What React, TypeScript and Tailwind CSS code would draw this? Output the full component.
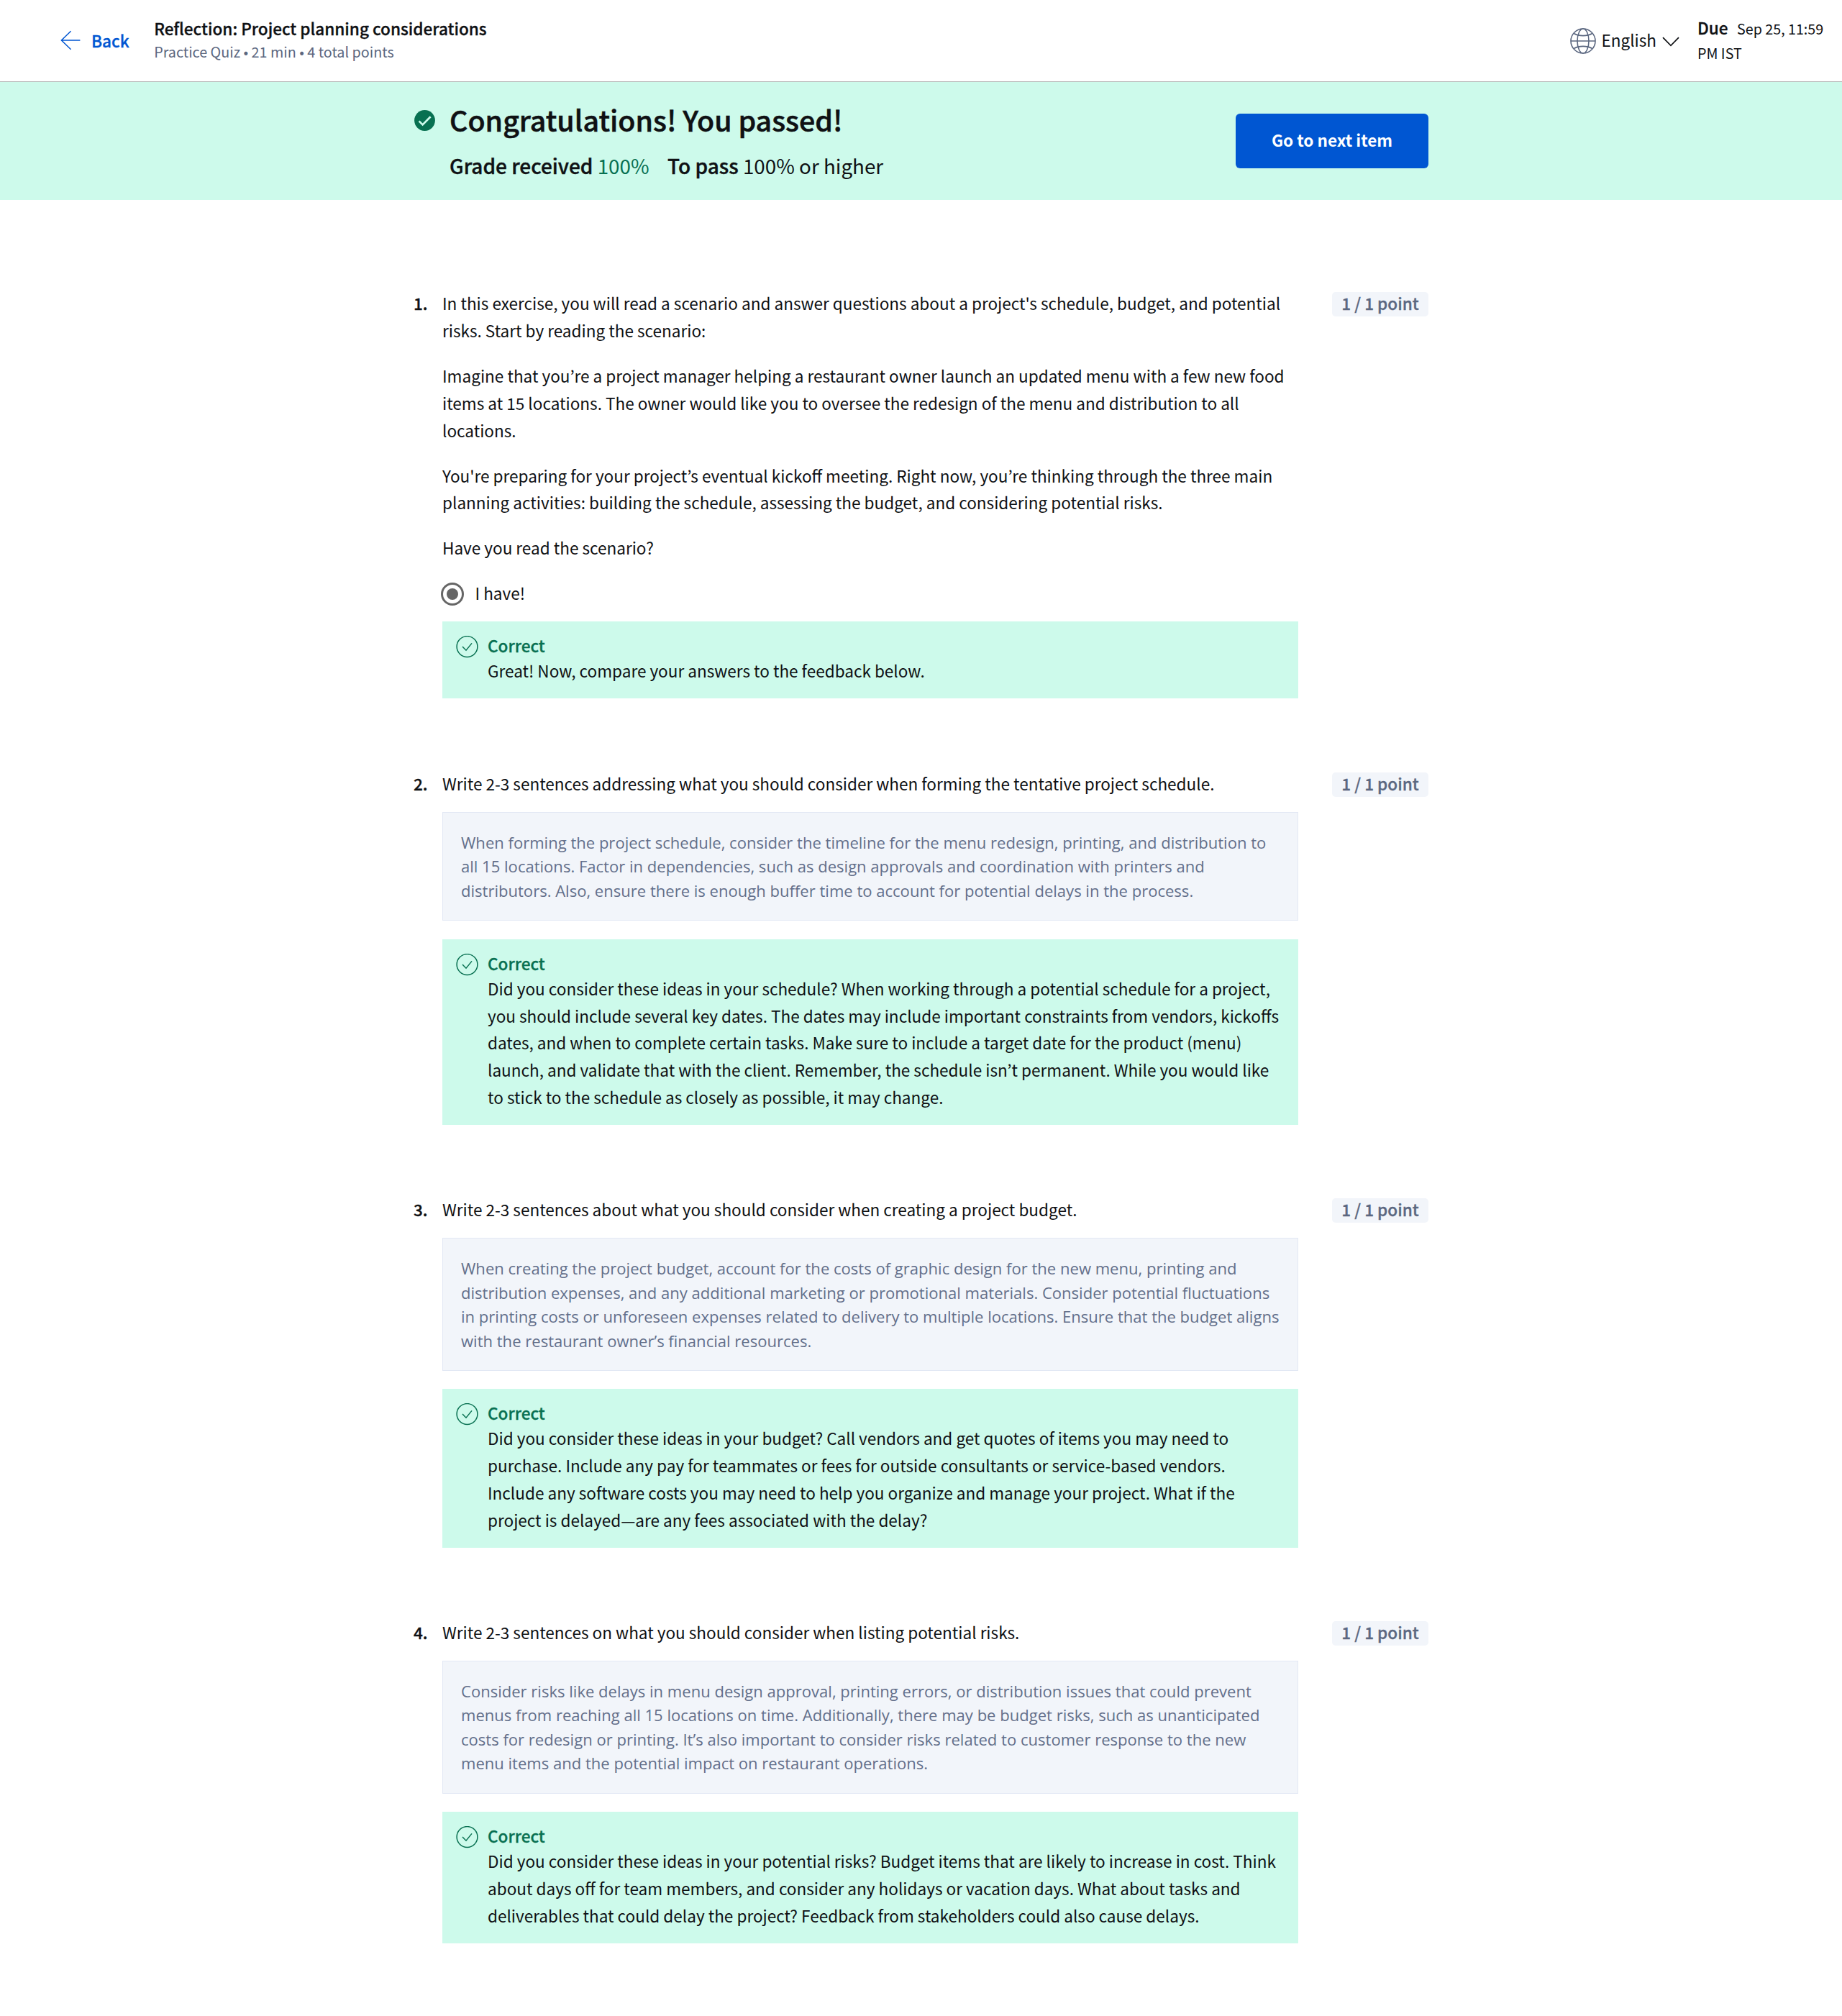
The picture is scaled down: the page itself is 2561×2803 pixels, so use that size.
import React from "react";

type AnswerBlock = { kind: "text"; lines: string[] } | { kind: "radio"; label: string };

type Question = {
  prompt: string[][];
  answer: AnswerBlock;
  feedback: string[];
};

const questions: Question[] = [
  {
    prompt: [
      [
        "In this exercise, you will read a scenario and answer questions about a project's schedule, budget, and potential",
        "risks. Start by reading the scenario:",
      ],
      [
        "Imagine that you’re a project manager helping a restaurant owner launch an updated menu with a few new food",
        "items at 15 locations. The owner would like you to oversee the redesign of the menu and distribution to all",
        "locations.",
      ],
      [
        "You're preparing for your project’s eventual kickoff meeting. Right now, you’re thinking through the three main",
        "planning activities: building the schedule, assessing the budget, and considering potential risks.",
      ],
      ["Have you read the scenario?"],
    ],
    answer: { kind: "radio", label: "I have!" },
    feedback: ["Great! Now, compare your answers to the feedback below."],
  },
  {
    prompt: [
      ["Write 2-3 sentences addressing what you should consider when forming the tentative project schedule."],
    ],
    answer: {
      kind: "text",
      lines: [
        "When forming the project schedule, consider the timeline for the menu redesign, printing, and distribution to",
        "all 15 locations. Factor in dependencies, such as design approvals and coordination with printers and",
        "distributors. Also, ensure there is enough buffer time to account for potential delays in the process.",
      ],
    },
    feedback: [
      "Did you consider these ideas in your schedule? When working through a potential schedule for a project,",
      "you should include several key dates. The dates may include important constraints from vendors, kickoffs",
      "dates, and when to complete certain tasks. Make sure to include a target date for the product (menu)",
      "launch, and validate that with the client. Remember, the schedule isn’t permanent. While you would like",
      "to stick to the schedule as closely as possible, it may change.",
    ],
  },
  {
    prompt: [["Write 2-3 sentences about what you should consider when creating a project budget."]],
    answer: {
      kind: "text",
      lines: [
        "When creating the project budget, account for the costs of graphic design for the new menu, printing and",
        "distribution expenses, and any additional marketing or promotional materials. Consider potential fluctuations",
        "in printing costs or unforeseen expenses related to delivery to multiple locations. Ensure that the budget aligns",
        "with the restaurant owner’s financial resources.",
      ],
    },
    feedback: [
      "Did you consider these ideas in your budget? Call vendors and get quotes of items you may need to",
      "purchase. Include any pay for teammates or fees for outside consultants or service-based vendors.",
      "Include any software costs you may need to help you organize and manage your project. What if the",
      "project is delayed—are any fees associated with the delay?",
    ],
  },
  {
    prompt: [["Write 2-3 sentences on what you should consider when listing potential risks."]],
    answer: {
      kind: "text",
      lines: [
        "Consider risks like delays in menu design approval, printing errors, or distribution issues that could prevent",
        "menus from reaching all 15 locations on time. Additionally, there may be budget risks, such as unanticipated",
        "costs for redesign or printing. It’s also important to consider risks related to customer response to the new",
        "menu items and the potential impact on restaurant operations.",
      ],
    },
    feedback: [
      "Did you consider these ideas in your potential risks? Budget items that are likely to increase in cost. Think",
      "about days off for team members, and consider any holidays or vacation days. What about tasks and",
      "deliverables that could delay the project? Feedback from stakeholders could also cause delays.",
    ],
  },
];

/* Weight between medium and bold, for headings and labels. */
const semibold = "font-medium [-webkit-text-stroke:0.014em_currentColor]";

function Lines({ lines }: { lines: string[] }) {
  return (
    <p className="whitespace-nowrap">
      {lines.map((line) => (
        <span key={line} className="block">
          {line}
        </span>
      ))}
    </p>
  );
}

function ArrowLeft() {
  return (
    <svg className="h-7 w-7 shrink-0 text-[#0056d2]" viewBox="0 0 28 28" fill="none" stroke="currentColor" strokeWidth="1.5">
      <path d="M14.6 1.3 1.4 14l13.2 12.7M1.4 14h26" />
    </svg>
  );
}

function Globe() {
  return (
    <svg className="size-9 shrink-0 text-[#5b6780]" viewBox="0 0 36 36" fill="none" stroke="currentColor" strokeWidth="1.6">
      <circle cx="18" cy="18" r="17" />
      <ellipse cx="18" cy="18" rx="8" ry="17" />
      <path d="M1 18h34M5.300 7.500c3.200 2 7.700 3.100 12.700 3.100s9.500-1.100 12.700-3.100M5.300 28.500c3.200-2 7.700-3.100 12.700-3.100s9.500 1.100 12.700 3.100" />
    </svg>
  );
}

function ChevronDown() {
  return (
    <svg className="h-[14px] w-6 shrink-0" viewBox="0 0 24 14" fill="none" stroke="currentColor" strokeWidth="1.7">
      <path d="m1 1.200 11 11.200L23 1.200" />
    </svg>
  );
}

function SolidCheck() {
  return (
    <svg className="size-[29px] shrink-0" viewBox="0 0 29 29" fill="none">
      <circle cx="14.500" cy="14.500" r="14.400" fill="#087051" />
      <path d="m6.600 15.400 5 5 11-11.200" stroke="#cdfaeb" strokeWidth="2.700" />
    </svg>
  );
}

function OutlineCheck() {
  return (
    <svg className="mt-[3px] size-[31px] shrink-0 text-[#087051]" viewBox="0 0 31 31" fill="none" stroke="currentColor" strokeWidth="1.500">
      <circle cx="15.500" cy="15" r="14.400" />
      <path d="m9 15 5 5.200 8-9.800" />
    </svg>
  );
}

function Header() {
  return (
    <header className="flex h-[114px] justify-between border-b border-[#b8b8b8]">
      <div className="flex">
        <a className="ml-[84px] mt-[39px] flex h-8 items-center text-[#0056d2]" href="#">
          <span className="flex pt-0.5">
            <ArrowLeft />
          </span>
          <span className={`ml-[15px] pt-px leading-8 ${semibold}`}>Back</span>
        </a>
        <div className="ml-[34.5px] mt-[23px] whitespace-nowrap">
          <h1 className={`leading-8 ${semibold}`}>Reflection: Project planning considerations</h1>
          <p className="mt-0.5 text-[19.75px] leading-[29px] text-[#5b6780]">Practice Quiz • 21 min • 4 total points</p>
        </div>
      </div>
      <div className="flex whitespace-nowrap">
        <div className="mt-[39px] flex h-9 items-start">
          <Globe />
          <span className="ml-[7px] leading-8">English</span>
          <span className="ml-[8px] mt-[12px]">
            <ChevronDown />
          </span>
        </div>
        <div className="ml-[25px] mt-[21px] w-[201px] leading-[34px]">
          <div>
            <span className={semibold}>Due</span>
            <span className="ml-[12.5px] text-[19.7px]">Sep 25, 11:59</span>
          </div>
          <div className="text-[19.7px]">PM IST</div>
        </div>
      </div>
    </header>
  );
}

function Banner() {
  return (
    <section className="h-[164px] bg-[#cdfaeb]">
      <div className="ml-[576px] flex w-[1410px] justify-between">
        <div className="flex pt-[23px]">
          <div className="pt-4">
            <SolidCheck />
          </div>
          <div className="ml-[20px] whitespace-nowrap">
            <h2 className={`pt-px text-[39.35px] leading-[56px] ${semibold}`}>Congratulations! You passed!</h2>
            <div className="mt-4 flex gap-[25.5px] text-[27.8px] leading-[41px]">
              <div>
                <span className={`text-[28px] ${semibold}`}>Grade received</span>{" "}
                <span className="text-[#087051]">100%</span>
              </div>
              <div>
                <span className={`text-[28px] ${semibold}`}>To pass</span> 100% or higher
              </div>
            </div>
          </div>
        </div>
        <button className="mt-[44px] h-[76px] w-[268px] rounded-[6px] bg-[#0056d2] pb-[4px] font-bold leading-8 text-white">
          Go to next item
        </button>
      </div>
    </section>
  );
}

function RadioAnswer({ label }: { label: string }) {
  return (
    <div className="mt-[25.2px] flex items-start">
      <span className="-ml-[2px] mt-[4px] flex size-8 items-center justify-center rounded-full border-[3.6px] border-[#666]">
        <span className="size-4 rounded-full bg-[#666]" />
      </span>
      <span className="ml-[15.5px]">{label}</span>
    </div>
  );
}

function TextAnswer({ lines }: { lines: string[] }) {
  return (
    <div className="mt-[20.2px] border border-[#e2e8f4] bg-[#f2f5fa] px-[25px] pb-[23.6px] pt-[25px] font-['Open_Sans',sans-serif] text-[22.05px] leading-[33.5px] text-[#636f8a]">
      <Lines lines={lines} />
    </div>
  );
}

function Feedback({ lines, spaced }: { lines: string[]; spaced: boolean }) {
  return (
    <div
      className={`flex bg-[#cdfaeb] pb-[19.2px] pl-[19px] pt-[16.8px] ${spaced ? "mt-[25.7px]" : "mb-[0.5px] mt-[20.2px]"}`}
    >
      <OutlineCheck />
      <div className="ml-[13px]">
        <div className={`leading-[33.3px] text-[#087051] ${semibold}`}>Correct</div>
        <Lines lines={lines} />
      </div>
    </div>
  );
}

function QuestionItem({ question, index }: { question: Question; index: number }) {
  return (
    <article className="flex items-start">
      <div className={`w-[40px] shrink-0 ${semibold}`}>{index}.</div>
      <div className="w-[1190px] shrink-0">
        <div className="flex flex-col gap-[25.2px]">
          {question.prompt.map((lines) => (
            <Lines key={lines[0]} lines={lines} />
          ))}
        </div>
        {question.answer.kind === "radio" ? (
          <RadioAnswer label={question.answer.label} />
        ) : (
          <TextAnswer lines={question.answer.lines} />
        )}
        <Feedback lines={question.feedback} spaced={question.answer.kind === "text"} />
      </div>
      <div
        className={`ml-auto mt-[3px] h-[34px] w-[134px] rounded-[5px] bg-[#f2f5fa] text-center leading-[30px] text-[#5b6780] ${semibold}`}
      >
        1 / 1 point
      </div>
    </article>
  );
}

export default function App() {
  return (
    <div
      lang="en"
      className="min-h-[2803px] w-[2561px] bg-white font-['Noto_Sans_CJK_JP',sans-serif] text-[22.56px] leading-[37.8px] text-[#0f1114]"
    >
      <Header />
      <Banner />
      <main className="ml-[575px] mt-[125.2px] flex w-[1411px] flex-col gap-[99.1px]">
        {questions.map((q, i) => (
          <QuestionItem key={i} question={q} index={i + 1} />
        ))}
      </main>
    </div>
  );
}
